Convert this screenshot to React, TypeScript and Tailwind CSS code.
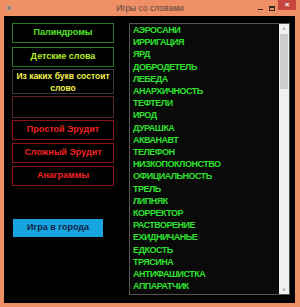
import React from "react";

const words = [
  "АЭРОСАНИ",
  "ИРРИГАЦИЯ",
  "ЯРД",
  "ДОБРОДЕТЕЛЬ",
  "ЛЕБЕДА",
  "АНАРХИЧНОСТЬ",
  "ТЕФТЕЛИ",
  "ИРОД",
  "ДУРАШКА",
  "АКВАНАВТ",
  "ТЕЛЕФОН",
  "НИЗКОПОКЛОНСТВО",
  "ОФИЦИАЛЬНОСТЬ",
  "ТРЕЛЬ",
  "ЛИПНЯК",
  "КОРРЕКТОР",
  "РАСТВОРЕНИЕ",
  "ЕХИДНИЧАНЬЕ",
  "ЕДКОСТЬ",
  "ТРЯСИНА",
  "АНТИФАШИСТКА",
  "АППАРАТЧИК",
];

export default function App() {
  return (
    <div
      className="w-[300px] h-[307px] bg-[#ee8f66] flex flex-col overflow-hidden"
      style={{ fontFamily: '"Liberation Sans", Arial, sans-serif' }}
    >
      {/* title bar */}
      <div className="h-[16px] flex items-center relative shrink-0">
        <div className="ml-[6px] w-[6px] h-[6px] rounded-full bg-[#9a7a70] border border-[#c9a89a]" />
        <div className="absolute left-0 right-0 top-[2px] text-center text-[8.5px] text-[#5a4840] leading-[12px]">
          Игры со словами
        </div>
        <div className="ml-auto flex items-start h-full">
          <div className="w-[12px] h-full flex items-center justify-center">
            <div className="w-[5px] h-[1px] bg-[#3a2a24] mt-[3px]" />
          </div>
          <div className="w-[12px] h-full flex items-center justify-center">
            <div className="w-[6px] h-[5px] border border-[#3a2a24] border-t-2" />
          </div>
          <div className="w-[18px] h-[10px] bg-[#c7463f] flex items-center justify-center text-white text-[8px] leading-none mr-[4px] font-bold">
            ×
          </div>
        </div>
      </div>

      {/* body */}
      <div className="flex-1 ml-[4px] mr-[5px] mb-[4px] bg-black flex pt-[7px] pl-[8px]">
        <div className="w-[102px] flex flex-col text-[9px] font-bold">
          <div className="h-[20px] border border-[#2a7a2a] flex items-center justify-center text-[#55e02a]">
            Палиндромы
          </div>
          <div className="h-[20px] mt-[4px] border border-[#2a7a2a] flex items-center justify-center text-[#b5ec2a]">
            Детские слова
          </div>
          <div className="h-[25px] mt-[2px] border border-[#3a3a3a] flex items-center justify-center text-center text-[#f2f24a] leading-[12px] text-[8.5px]">
            Из каких букв состоит
            <br />
            слово
          </div>
          <div className="h-[22px] mt-[2px] border border-[#5a2626]" />
          <div className="h-[20px] mt-[2px] border border-[#8a1414] flex items-center justify-center text-[#ee2222]">
            Простой Эрудит
          </div>
          <div className="h-[20px] mt-[3px] border border-[#8a1414] flex items-center justify-center text-[#ee2222]">
            Сложный Эрудит
          </div>
          <div className="h-[20px] mt-[3px] border border-[#8a1414] flex items-center justify-center text-[#ee2222]">
            Анаграммы
          </div>
          <div className="h-[18px] w-[90px] ml-[1px] mt-[33px] bg-[#17a4df] flex items-center justify-center text-[#14234a]">
            Игра в города
          </div>
        </div>

        {/* list box */}
        <div className="ml-[15px] w-[161px] h-[272px] border border-[#555555] bg-[#0a0a0a] flex">
          <div className="flex-1 pl-[3px] overflow-hidden">
            {words.map((w) => (
              <div
                key={w}
                className="text-[9px] font-bold leading-[12.2px] tracking-[-0.5px] text-[#2fe02f] whitespace-nowrap"
              >
                {w}
              </div>
            ))}
          </div>
          <div className="w-[10px] bg-[#f0f0f0] flex flex-col">
            <div className="h-[9px] flex items-center justify-center text-[6px] text-[#606060] leading-none">
              ˄
            </div>
            <div className="h-[55px] mx-[1px] bg-[#cdcdcd] mt-[1px]" />
            <div className="flex-1" />
            <div className="h-[9px] flex items-center justify-center text-[6px] text-[#606060] leading-none">
              ˅
            </div>
          </div>
        </div>
      </div>
    </div>
  );
}
